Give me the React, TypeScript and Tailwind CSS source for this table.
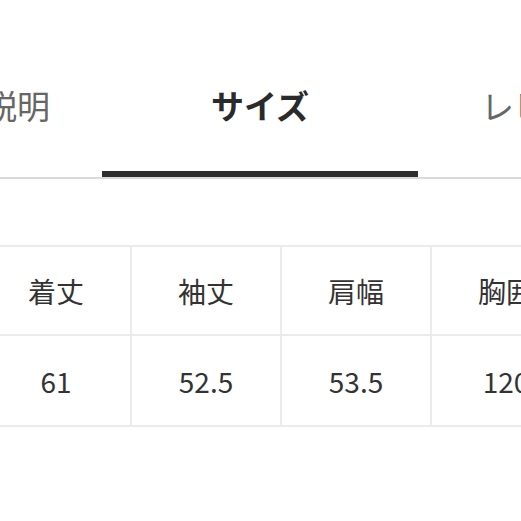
import React from "react"

const tabs = [
  { label: "商品説明", width: "w-[236px]", active: false },
  { label: "サイズ", width: "w-[316px]", active: true },
  { label: "レビュー", width: "w-[258px]", active: false },
]

const heads = ["着丈", "袖丈", "肩幅", "胸囲", "裄丈"]
const values = ["61", "52.5", "53.5", "120", "80"]

export default function App() {
  return (
    <div className="w-[521px] h-[521px] bg-white overflow-hidden font-['Noto_Sans_CJK_JP','Noto_Sans',sans-serif]">
      <div className="border-b-2 border-[#dadada]">
        <nav className="flex ml-[-134px] h-[177px]">
          {tabs.map((tab, i) => (
            <div
              key={i}
              className={`${tab.width} shrink-0 flex justify-center pt-[89px] ${
                tab.active ? "border-b-[6px] border-[#2e2e2e]" : ""
              }`}
            >
              <span
                className={`text-[33px] leading-none whitespace-nowrap ${
                  tab.active ? "font-bold text-[#2a2a2a]" : "text-[#666]"
                }`}
              >
                {tab.label}
              </span>
            </div>
          ))}
        </nav>
      </div>

      <div className="mt-[66px] ml-[-20px] w-max grid grid-cols-[repeat(5,148px)] gap-[2px] p-[2px] bg-[#ebebeb] text-[#333] text-[28px]">
        {heads.map((h) => (
          <div key={h} className="h-[87px] bg-white flex items-center justify-center leading-none">
            {h}
          </div>
        ))}
        {values.map((v, i) => (
          <div key={i} className="h-[89px] bg-white flex items-center justify-center leading-none">
            {v}
          </div>
        ))}
      </div>
    </div>
  )
}
